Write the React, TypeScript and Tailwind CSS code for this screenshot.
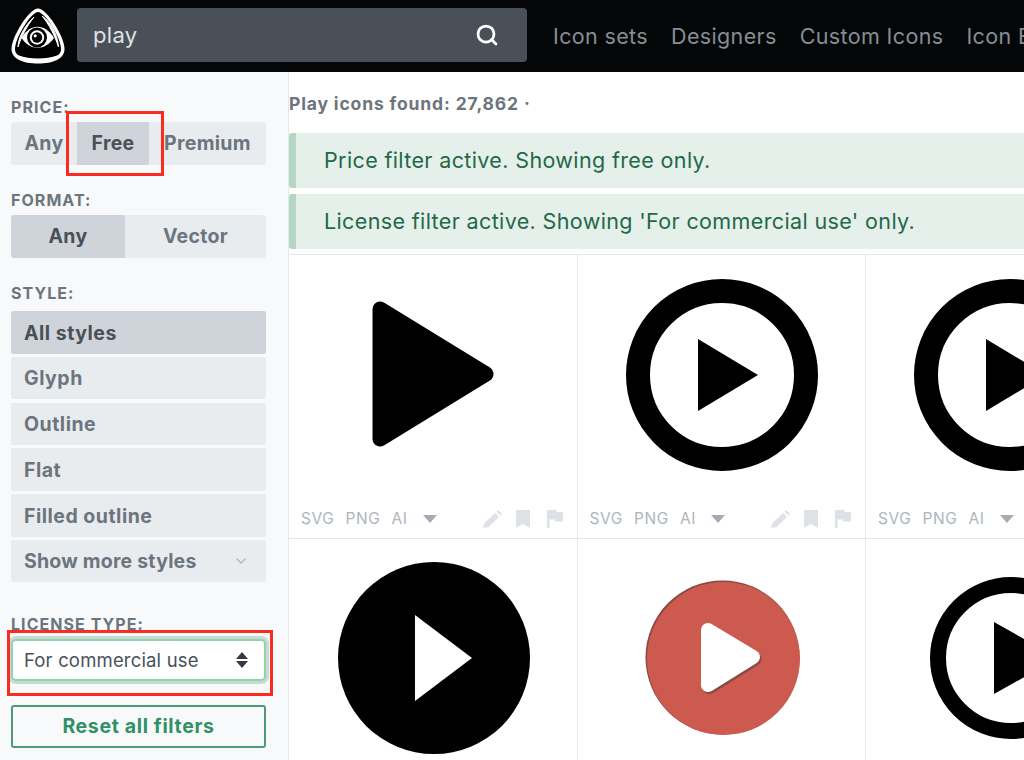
import { ChevronDown, Search } from "lucide-react";

const STYLES = ["All styles", "Glyph", "Outline", "Flat", "Filled outline"];
const NAV = ["Icon sets", "Designers", "Custom Icons", "Icon Editor"];

function Logo() {
  return (
    <svg viewBox="0 0 54 56" className="h-[56px] w-[54px] shrink-0">
      <path
        d="M27 0.5C36 0.5 53.5 29 53.5 41C53.5 51 42 55.5 27 55.5C12 55.5 0.5 51 0.5 41C0.5 29 18 0.5 27 0.5Z"
        fill="#fff"
      />
      <path
        d="M27 4C20 4 4 30 4 41C4 44 5 46 8 47.5C18 51.5 36 51.5 46 47.5C49 46 50 44 50 41C50 30 34 4 27 4Z"
        fill="#000"
      />
      <path d="M23 9C15 16 7 29 7 39C10 29 16 18 23 9Z" fill="#fff" stroke="#fff" strokeWidth="1" />
      <path d="M31 8C39 13 47 27 47.5 39C44 28 38 16 31 8Z" fill="#fff" stroke="#fff" strokeWidth="1" />
      <path d="M10.5 30C19 15 34 15 43 30C34 43 19 43 10.5 30Z" fill="#fff" />
      <circle cx="26" cy="29.5" r="10" fill="#000" />
      <circle cx="26" cy="29.5" r="7.2" fill="#fff" />
      <circle cx="26" cy="29.5" r="5.2" fill="#000" />
      <circle cx="24.2" cy="27.8" r="1.6" fill="#fff" />
    </svg>
  );
}

function FileLinks() {
  return (
    <div className="absolute inset-x-3 bottom-[9px] flex items-center text-[15.5px] leading-5 tracking-[0.6px] text-[#adb5bd]">
      <span>SVG</span>
      <span className="ml-[11px]">PNG</span>
      <span className="ml-[11px]">AI</span>
      <svg viewBox="0 0 14 8" className="ml-[15px] h-2 w-[14px]">
        <path d="M0 0H14L7 8Z" fill="#a6acb3" />
      </svg>
      <div className="mr-[2px] ml-auto flex items-center">
        <svg viewBox="0 0 19 18" className="h-[18px] w-[19px]">
          <path d="M0 18L1.5 13L12 3L16 7L5.5 17Z" fill="#dee2e6" />
          <path d="M13.5 1.5L15 0L19 3.5L17.5 5.5Z" fill="#dee2e6" />
        </svg>
        <svg viewBox="0 0 14 18" className="ml-[14px] h-[18px] w-[14px]">
          <path d="M0 0H14V18L7 14L0 18Z" fill="#dee2e6" />
        </svg>
        <svg viewBox="0 0 16 18" className="ml-[17px] h-[18px] w-4">
          <path d="M0 0H9.5V2H16V11.5H8V9.5H2.5V18H0Z" fill="#dee2e6" />
        </svg>
      </div>
    </div>
  );
}

function IconCell({ children, tools = true }: { children: React.ReactNode; tools?: boolean }) {
  return (
    <div className="relative flex h-[284px] w-[288.5px] shrink-0 items-start justify-center border-r border-b border-[#e3e8ef]">
      {children}
      {tools && <FileLinks />}
    </div>
  );
}

function Ring({ nudge = false }: { nudge?: boolean }) {
  return (
    <svg viewBox="0 0 192 192" className={`mt-[24px] h-48 w-48 ${nudge ? "ml-[2px]" : ""}`}>
      <circle cx="96" cy="96" r="84" fill="none" stroke="#000" strokeWidth="24" />
      <path d="M72 60L132 96L72 132Z" fill="#000" />
    </svg>
  );
}

export default function App() {
  return (
    <div className="relative h-[760px] w-[1024px] overflow-hidden bg-white font-['Inter',sans-serif]">
      {/* Header */}
      <header className="flex h-[72px] items-center bg-[#050607] pl-[11px]">
        <Logo />
        <div className="ml-3 flex h-[54px] w-[450px] shrink-0 -translate-y-[1px] items-center justify-between rounded-[4px] bg-[#495057] pr-[28px] pl-4">
          <span className="text-[22px] tracking-[0.3px] text-[#dee2e6]">play</span>
          <Search className="h-6 w-6 text-white" strokeWidth={2.75} />
        </div>
        <nav className="ml-[26px] flex gap-[23px] whitespace-nowrap text-[21.5px] tracking-[0.36px] text-[#868e96]">
          {NAV.map((n) => (
            <span key={n}>{n}</span>
          ))}
        </nav>
      </header>

      <div className="flex h-[688px]">
        {/* Sidebar */}
        <aside className="w-[289px] shrink-0 border-r border-[#e3e8ef] bg-[#f8f9fb] px-[11px] pt-[25px]">
          <p className="text-[16px] leading-5 font-bold tracking-[1.05px] text-[#6c757d]">PRICE:</p>
          <div className="mt-[5px] flex h-[43px] w-[255px] items-center rounded-[3px] bg-[#e9ecef] text-[19.5px] font-bold tracking-[0.3px] text-[#6c757d]">
            <span className="flex w-[66px] justify-center">Any</span>
            <span className="flex h-full w-[72px] items-center justify-center bg-[#ced4da] text-[#495057]">Free</span>
            <span className="flex flex-1 justify-center">Premium</span>
          </div>

          <p className="mt-[25px] text-[16px] leading-5 font-bold tracking-[1.05px] text-[#6c757d]">FORMAT:</p>
          <div className="mt-[5px] flex h-[43px] w-[255px] items-center rounded-[3px] bg-[#e9ecef] text-[19.5px] font-bold tracking-[0.3px] text-[#6c757d]">
            <span className="flex h-full w-[114px] items-center justify-center rounded-l-[3px] bg-[#ced4da] text-[#495057]">Any</span>
            <span className="flex flex-1 justify-center">Vector</span>
          </div>

          <p className="mt-[25px] text-[16px] leading-5 font-bold tracking-[1.05px] text-[#6c757d]">STYLE:</p>
          <div className="mt-[8px] flex w-[255px] flex-col gap-[3.3px] text-[19.5px] font-bold tracking-[0.5px] text-[#6c757d]">
            {STYLES.map((s, i) => (
              <div
                key={s}
                className={`flex h-[42.5px] items-center rounded-[2px] px-[13px] pt-[2px] ${i === 0 ? "bg-[#ced4da] text-[#495057]" : "bg-[#e9ecef]"}`}
              >
                {s}
              </div>
            ))}
            <div className="flex h-[42.5px] items-center justify-between rounded-[2px] bg-[#e9ecef] pr-[17px] pl-[13px] tracking-[0.2px]">
              Show more styles
              <ChevronDown className="h-4 w-4 text-[#adb5bd]" />
            </div>
          </div>

          <p className="mt-[32px] text-[16px] leading-5 font-bold tracking-[1.05px] text-[#6c757d]">LICENSE TYPE:</p>
          <div className="mt-[5px] flex h-[42px] w-[255px] items-center justify-between rounded-[5px] border-2 border-[#8fd3ae] bg-white pr-[16px] pl-[11px] text-[18.5px] tracking-[0.17px] text-[#495057] shadow-[0_0_0_3px_#c6dcd0]">
            For commercial use
            <svg viewBox="0 0 12 18" className="h-[18px] w-3">
              <path d="M6 1L12 8H0ZM0 10H12L6 17Z" fill="#343a40" />
            </svg>
          </div>
          <div className="mt-[24px] flex h-[43px] w-[255px] items-center justify-center rounded-[3px] border-2 border-[#4f9a76] text-[19.5px] font-bold tracking-[0.65px] text-[#2f9163]">
            Reset all filters
          </div>
        </aside>

        {/* Results */}
        <main className="min-w-0 flex-1 overflow-hidden">
          <p className="mt-[21.5px] text-[17.5px] leading-5 font-bold tracking-[0.85px] whitespace-nowrap text-[#6c757d]">
            Play icons found: 27,862 ·
          </p>
          <div className="mt-[19.5px] flex h-[55px] w-[800px] items-center rounded-l-[3px] border-l-[7px] border-[#b5d6c4] bg-[#e6f0ea] pl-[28px] text-[21.5px] tracking-[0.37px] text-[#22684a]">
            Price filter active. Showing free only.
          </div>
          <div className="mt-[6px] flex h-[55px] w-[800px] items-center rounded-l-[3px] border-l-[7px] border-[#b5d6c4] bg-[#e6f0ea] pl-[28px] text-[21.5px] tracking-[0.37px] text-[#22684a]">
            License filter active. Showing 'For commercial use' only.
          </div>

          <div className="mt-[5px] flex w-[867px] flex-wrap border-t border-[#e3e8ef]">
            <IconCell>
              <svg viewBox="0 0 122 146" className="mt-[46px] ml-[1px] h-[146px] w-[122px]">
                <path d="M8 8L114 73L8 138Z" fill="#000" stroke="#000" strokeWidth="15" strokeLinejoin="round" />
              </svg>
            </IconCell>
            <IconCell>
              <Ring nudge />
            </IconCell>
            <IconCell>
              <Ring />
            </IconCell>
            <IconCell tools={false}>
              <svg viewBox="0 0 192 192" className="mt-[23px] ml-[2px] h-48 w-48">
                <circle cx="96" cy="96" r="96" fill="#000" />
                <path d="M77 53L134 96L77 139Z" fill="#fff" />
              </svg>
            </IconCell>
            <IconCell tools={false}>
              <svg viewBox="0 0 156 156" className="mt-[41px] ml-[4px] h-[156px] w-[156px]">
                <circle cx="77.5" cy="77.5" r="77" fill="#8a4a42" />
                <circle cx="78.5" cy="78.5" r="76.5" fill="#cd5a4f" />
                <path d="M63 50L108 77L63 105Z" fill="#8a4a42" stroke="#8a4a42" strokeWidth="14" strokeLinejoin="round" transform="translate(1.5 2)" />
                <path d="M63 50L108 77L63 105Z" fill="#fff" stroke="#fff" strokeWidth="14" strokeLinejoin="round" />
              </svg>
            </IconCell>
            <IconCell tools={false}>
              <svg viewBox="0 0 162 162" className="mt-[38px] ml-[2px] h-[162px] w-[162px]">
                <circle cx="81" cy="81" r="73" fill="none" stroke="#000" strokeWidth="16" />
                <path d="M64 45L128 81L64 117Z" fill="#000" />
              </svg>
            </IconCell>
          </div>
        </main>
      </div>

      {/* Annotation boxes */}
      <div className="absolute top-[111px] left-[66px] h-[65px] w-[98px] border-[3px] border-[#fa2c1f]" />
      <div className="absolute top-[630px] left-[7px] h-[66px] w-[266px] border-[3px] border-[#fa2c1f]" />
    </div>
  );
}
